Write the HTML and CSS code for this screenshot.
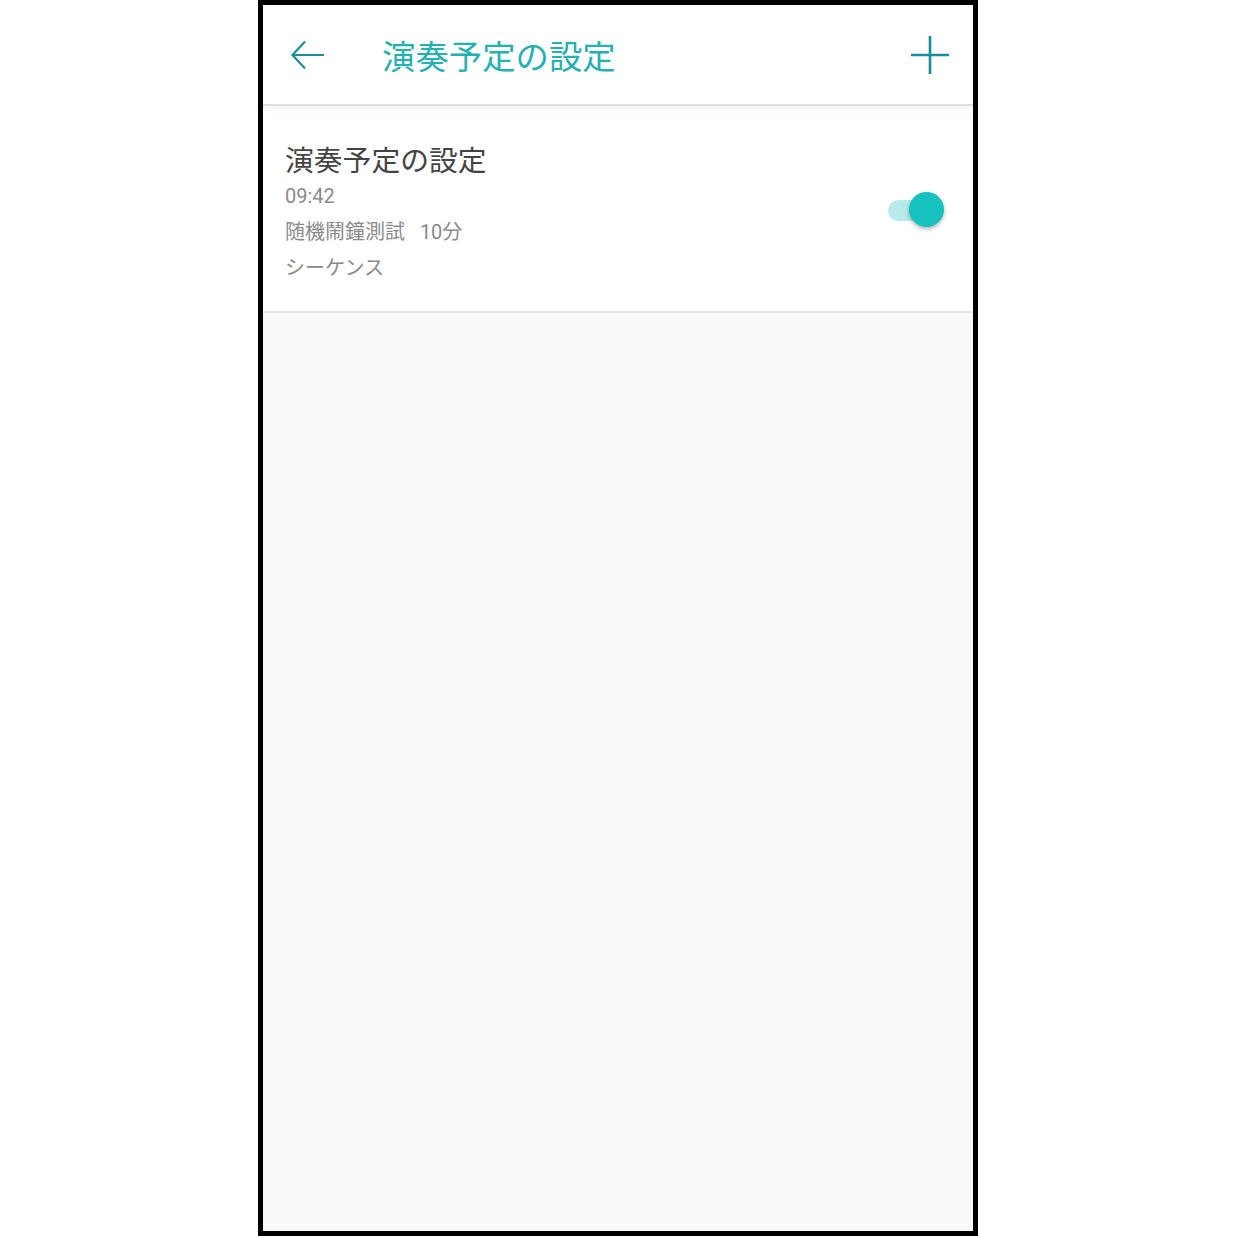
FILE: index.html
```html
<!DOCTYPE html>
<html lang="ja">
<head>
<meta charset="utf-8">
<title>演奏予定の設定</title>
<link rel="stylesheet" href="styles.css">
</head>
<body>
<div class="phone">
  <header class="appbar">
    <button class="icon-btn back" aria-label="戻る">
      <svg width="34" height="30" viewBox="0 0 34 30">
        <path d="M1.5 15 H33 M14 1.5 L1.5 15 L14 28.5" fill="none" stroke="#1a8c9b" stroke-width="2.2" stroke-linecap="butt" stroke-linejoin="miter"/>
      </svg>
    </button>
    <h1 class="appbar-title">演奏予定の設定</h1>
    <button class="icon-btn add" aria-label="追加">
      <svg width="40" height="40" viewBox="0 0 40 40">
        <path d="M20 1 V39 M1 20 H39" fill="none" stroke="#1a8c9b" stroke-width="2.6"/>
      </svg>
    </button>
  </header>
  <main class="content">
    <div class="item">
      <div class="item-text">
        <div class="item-title">演奏予定の設定</div>
        <div class="item-sub">09:42</div>
        <div class="item-sub">随機鬧鐘測試&nbsp;&nbsp;&nbsp;10分</div>
        <div class="item-sub">シーケンス</div>
      </div>
      <div class="switch on">
        <span class="track"></span>
        <span class="thumb"></span>
      </div>
    </div>
  </main>
</div>
</body>
</html>
```
FILE: styles.css
```css
html, body {
  margin: 0;
  padding: 0;
  background: #ffffff;
}
body {
  font-family: Roboto, "Noto Sans CJK JP", sans-serif;
}
.phone {
  box-sizing: border-box;
  width: 720px;
  height: 1236px;
  margin-left: 258px;
  border: 5px solid #000;
  background: #f9f9f9;
  display: flex;
  flex-direction: column;
  overflow: hidden;
}
.appbar {
  position: relative;
  z-index: 2;
  height: 99px;
  flex: 0 0 auto;
  background: #ffffff;
  border-bottom: 2px solid #dedede;
  box-shadow: 0 3px 8px rgba(0, 0, 0, 0.06);
  display: flex;
  align-items: center;
}
.icon-btn {
  border: 0;
  padding: 0;
  background: none;
  display: flex;
}
.back {
  margin-left: 28px;
}
.appbar-title {
  margin: 0 0 0 57px;
  font-family: "Noto Sans CJK JP", sans-serif;
  font-weight: 400;
  font-size: 33.4px;
  line-height: 40px;
  color: #23b1b1;
  flex: 1 1 auto;
}
.add {
  margin-right: 23px;
}
.content {
  flex: 1 1 auto;
}
.item {
  background: #ffffff;
  border-bottom: 2px solid #e6e6e6;
  padding: 34px 29px 25px 22px;
  display: flex;
  align-items: center;
}
.item-text {
  flex: 1 1 auto;
}
.item-title {
  font-family: "Noto Sans CJK JP", sans-serif;
  font-size: 28.8px;
  line-height: 38px;
  color: #444444;
}
.item-sub {
  font-size: 20px;
  line-height: 36px;
  color: #8a8a8a;
}
.switch {
  position: relative;
  width: 56px;
  height: 36px;
  margin-bottom: 7px;
}
.track {
  position: absolute;
  left: 0;
  top: 8px;
  width: 48px;
  height: 21px;
  border-radius: 11px;
  background: #b7ebe9;
}
.thumb {
  position: absolute;
  right: 0;
  top: 0;
  width: 35px;
  height: 35px;
  border-radius: 50%;
  background: #15c2bd;
  box-shadow: 0 2px 4px rgba(0, 0, 0, 0.3);
}
```
